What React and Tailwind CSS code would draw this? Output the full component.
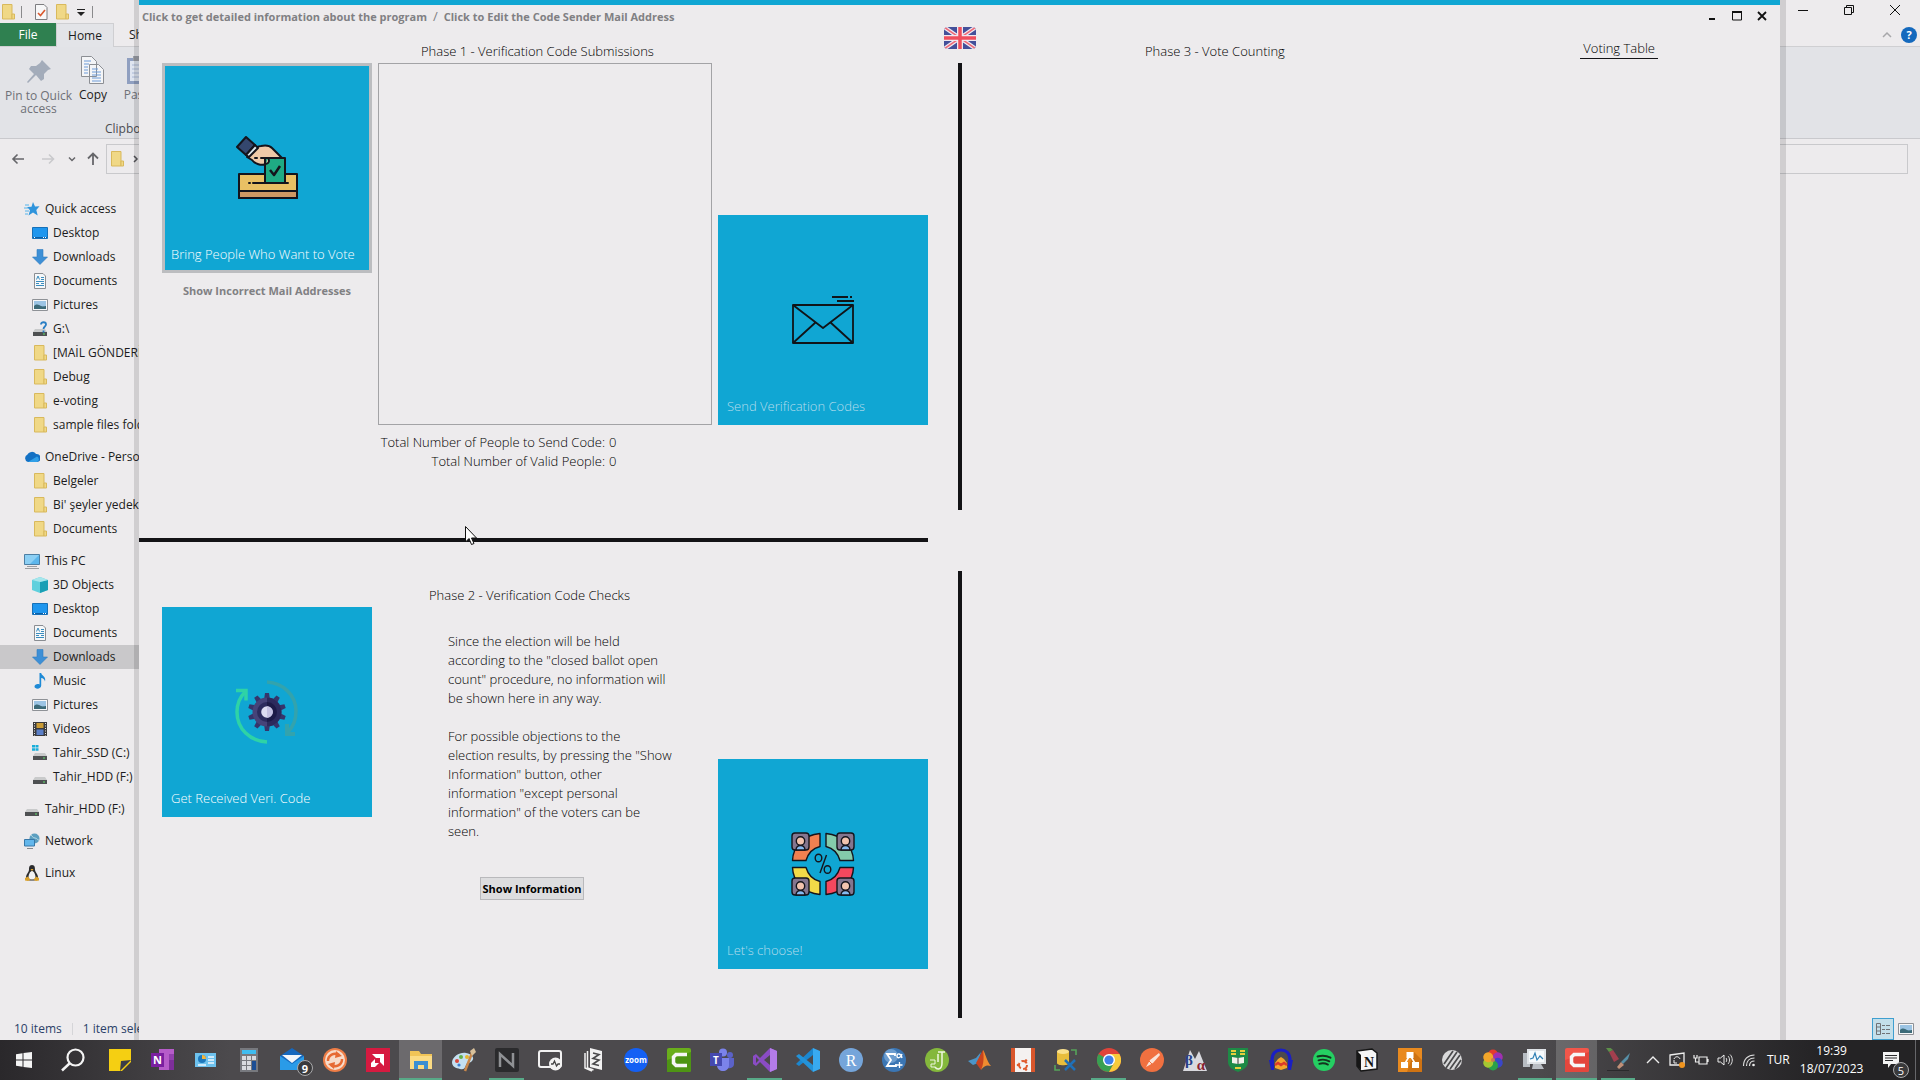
import React from "react";

const UI = "font-['Open_Sans','Noto_Sans',sans-serif]";

/* ---------- small icons ---------- */

function Svg({ size = "size-4", box = "0 0 16 16", children }) {
  return (
    <svg viewBox={box} className={`${size} shrink-0`} fill="none" aria-hidden="true">
      {children}
    </svg>
  );
}

const Folder = () => (
  <Svg>
    <path d="M2.5 .5h9.500v14.500h-9.500z" fill="#f0d886" stroke="#d9b95c" />
    <path d="M12 10h2.500v5H12z" fill="#f0d886" stroke="#d9b95c" />
  </Svg>
);
const Star = () => (
  <Svg>
    <path d="M9 1l2 4.500 4.500-.2L12.300 9l1.400 5.500L9 11.500 4.500 14.500 6 9.300 3 6l4.500-.3z" fill="#2f94dc" />
    <path d="M1 4h4M0 7h4M1 10h4M1 13h3" stroke="#55b4ec" />
  </Svg>
);
const DesktopIcon = () => (
  <Svg>
    <path d="M.5 2.500h15v11H.5z" fill="#1e96ee" stroke="#1670b8" />
    <path d="M1 12.500h14" stroke="#0c5fa5" />
    <path d="M2 12.500h1M11 12.500h1M13 12.500h1" stroke="#fff" />
  </Svg>
);
const DownArrow = () => (
  <Svg>
    <path d="M5 .5h6V8h4.500L8 15.500.5 8H5z" fill="#3d8fd6" stroke="#2f7cc0" strokeWidth=".6" />
  </Svg>
);
const DocIcon = () => (
  <Svg>
    <path d="M2.500.5H11L13.500 3v12.500h-11z" fill="#f5f7f9" stroke="#8a8d92" />
    <path d="M4.500 6.500L6 3l1.500 3.500M9 4.500h3M9 6.500h3M4 8.500h8M4 10.500h3M9 10.500h3M4 12.500h8" stroke="#3a8cbe" />
  </Svg>
);
const PictureIcon = () => (
  <Svg>
    <path d="M.5 2.500h15v11H.5z" fill="#f7f7f8" stroke="#8e9196" />
    <path d="M2 4h12v8H2z" fill="#9cc4e4" />
    <path d="M2 9c3-3 5-1 7 0s4 0 5 0v3H2z" fill="#3c6a78" />
  </Svg>
);
const Drive = ({ extra }) => (
  <Svg>
    <path d="M3 8h10l2 3H1z" fill="#c9cacb" />
    <path d="M1 11h14v4H1z" fill="#4e5052" />
    <path d="M11 13h2" stroke="#5fe06a" />
    {extra === "help" && <path d="M9 3.500c0-3 5-3 5 0 0 2-2.500 2-2.500 4.500M11.500 9.500v2" stroke="#2b7fc4" strokeWidth="1.800" />}
    {extra === "win" && <path d="M0 0h3v2.500H0zM3.500 0h3v2.500h-3zM0 3.200h3v2.500H0zM3.500 3.200h3v2.500h-3z" fill="#18aeda" />}
  </Svg>
);
const Cloud = () => (
  <Svg>
    <path d="M4 13a4 4 0 0 1-.5-7.500A5 5 0 0 1 12 5a4 4 0 0 1 1 8z" fill="#1471c4" />
    <path d="M4 13l9-5.500A3 3 0 0 1 13 13z" fill="#31a0e8" />
  </Svg>
);
const Pc = () => (
  <Svg>
    <path d="M.5 1.500h15v10H.5z" fill="#5cb6ec" stroke="#4d7fa4" />
    <path d="M1 2h14L6 11H1z" fill="#8ccff4" />
    <path d="M3 13.500h10M1 15.500h14" stroke="#9b9ea2" />
  </Svg>
);
const Cube = () => (
  <Svg>
    <path d="M0 3l8-3 8 3v10l-8 3-8-3z" fill="#5fd0dd" />
    <path d="M8 5l8-2v10l-8 3z" fill="#1a9fb5" />
    <path d="M0 3l8-3 8 3-8 2z" fill="#a6e6ec" />
  </Svg>
);
const Music = () => (
  <Svg>
    <path d="M7.500 0h1.700c.5 3 5 3 3.800 8.500-.5-2-2-3.500-3.800-3.500v7.500c0 4-6.700 4-6.700 1 0-2 3-3 5-2z" fill="#1e8ad6" />
  </Svg>
);
const Film = () => (
  <Svg>
    <path d="M1 1h14v14H1z" fill="#3a3a3c" />
    <path d="M4.500 2h7v5h-7z" fill="#c99a34" />
    <path d="M4.500 8.500h7V14h-7z" fill="#5b7fc8" />
    <path d="M2.500 2v13M13.500 2v13" stroke="#e8e8e8" strokeDasharray="1 1.500" />
  </Svg>
);
const NetworkIcon = () => (
  <Svg>
    <circle cx="10.500" cy="5.500" r="5" fill="#5c9fc0" />
    <path d="M7 2c2 1 1 3 4 3s2 3 4 2" stroke="#b4d8e4" />
    <path d="M.5 6.500h10v6.500H.5z" fill="#63b7ec" stroke="#3878a8" />
    <path d="M3 15.500h6" stroke="#85898d" />
  </Svg>
);
const Tux = () => (
  <Svg>
    <path d="M8 0c-3 0-3 3-3 5s-3 4-3 7 3 3.500 6 3.500 6-.5 6-3.500-3-5-3-7 0-5-3-5z" fill="#2b2b2d" />
    <path d="M8 6c-2 0-3.500 4-3.500 6S6 14.500 8 14.500s3.500-.5 3.500-2.500S10 6 8 6z" fill="#f2f2f2" />
    <path d="M6.500 4h3L8 6z" fill="#e8a82c" />
    <path d="M1 13l3-1.500L6.500 15 4 16l-3-.5zM15 13l-3-1.500L9.500 15l2.500 1 3-.5z" fill="#d9a02c" />
  </Svg>
);

/* ---------- explorer window ---------- */

const groups = [
  [
    ["Quick access", Star, 0],
    ["Desktop", DesktopIcon, 1],
    ["Downloads", DownArrow, 1],
    ["Documents", DocIcon, 1],
    ["Pictures", PictureIcon, 1],
    ["G:\\", () => <Drive extra="help" />, 1],
    ["[MAİL GÖNDERİ", Folder, 1],
    ["Debug", Folder, 1],
    ["e-voting", Folder, 1],
    ["sample files folder", Folder, 1],
  ],
  [
    ["OneDrive - Personal", Cloud, 0],
    ["Belgeler", Folder, 1],
    ["Bi' şeyler yedek", Folder, 1],
    ["Documents", Folder, 1],
  ],
  [
    ["This PC", Pc, 0],
    ["3D Objects", Cube, 1],
    ["Desktop", DesktopIcon, 1],
    ["Documents", DocIcon, 1],
    ["Downloads", DownArrow, 1, true],
    ["Music", Music, 1],
    ["Pictures", PictureIcon, 1],
    ["Videos", Film, 1],
    ["Tahir_SSD (C:)", () => <Drive extra="win" />, 1],
    ["Tahir_HDD (F:)", Drive, 1],
  ],
  [["Tahir_HDD (F:)", Drive, 0]],
  [["Network", NetworkIcon, 0]],
  [["Linux", Tux, 0]],
];

function Sidebar() {
  return (
    <nav className="mt-[23px] flex w-[139px] flex-1 flex-col gap-2 overflow-hidden">
      {groups.map((g, i) => (
        <ul key={i}>
          {g.map(([label, Icon, depth, on], j) => (
            <li
              key={j}
              className={`flex h-6 items-center gap-[5px] whitespace-nowrap ${depth ? "pl-8" : "pl-6"} ${on ? "bg-[#c9c8ca]" : ""}`}
            >
              <Icon />
              <span>{label}</span>
            </li>
          ))}
        </ul>
      ))}
    </nav>
  );
}

function Explorer() {
  return (
    <section className="flex h-full flex-col overflow-hidden bg-[#edebed] text-[12px] leading-4 text-[#1c1c20]">
      <header className="flex h-[23px] shrink-0 items-center">
        <div className="flex items-center gap-[5px]">
          <Folder />
          <span className="h-3 w-px bg-[#8a8a8c]" />
          <span className="w-px" />
          <Svg>
            <path d="M2.500.5H11L14 3.500v12H2.500z" fill="#f7f7f8" stroke="#7d7d80" />
            <path d="M5 9l2.500 2.500L12 6" stroke="#d9582e" strokeWidth="1.600" />
          </Svg>
          <Folder />
          <Svg size="size-3" box="0 0 12 12">
            <path d="M2 3.500h8" stroke="#222" />
            <path d="M2 6h8L6 10z" fill="#222" />
          </Svg>
          <span className="h-3 w-px bg-[#8a8a8c]" />
        </div>
        <div className="ml-auto flex items-center gap-[30px] pr-[17px] pb-[3px]">
          <button aria-label="Minimize explorer"><Svg><path d="M3 8.500h10" stroke="#111" /></Svg></button>
          <button aria-label="Restore explorer"><Svg><path d="M3.500 5.500h7v7h-7zM5.500 5V3.500h7v7H11" stroke="#111" /></Svg></button>
          <button aria-label="Close explorer"><Svg><path d="M3 3l10 10M13 3L3 13" stroke="#111" /></Svg></button>
        </div>
      </header>
      <div className="flex h-6 shrink-0 items-stretch border-b border-[#cfcfd2]">
        <button className="w-14 bg-[#2f8050] text-white">File</button>
        <button className="-mb-px w-[58px] border-x border-t border-[#cfcfd2] bg-[#e3e4e8]">Home</button>
        <button className="ml-[15px]">Share</button>
        <div className="ml-auto flex items-center gap-1.5 pr-[3px]">
          <Svg><path d="M4 10l4-4 4 4" stroke="#a7a7aa" strokeWidth="1.500" /></Svg>
          <span className="flex size-4 items-center justify-center rounded-full bg-[#1469bd] text-[11px] font-bold text-white">?</span>
        </div>
      </div>
      <div className="flex h-[92px] shrink-0 flex-col justify-between border-b border-[#c9c9cd] bg-[#e2e3e7]">
        <div className="flex items-start pt-2 text-center">
          <div className="flex w-[77px] flex-col items-center leading-[13px] text-[#6f7177]">
            <Svg size="size-8" box="0 0 32 32">
              <path d="M19 5l9 9-3 1-4 4v5l-3 2-5-6-8 8-1-1 7-8-5-5 2-3h5l4-3z" fill="#a3acba" />
            </Svg>
            <span className="pt-0.5">Pin to Quick access</span>
          </div>
          <div className="flex w-8 flex-col items-center">
            <Svg size="size-8" box="0 0 32 32">
              <path d="M4.500 1.500h10l5 5v15h-15zM12.500 9.500h9l5 5v14h-14z" fill="#f4f5f7" stroke="#8c8f94" />
              <path d="M7 6h7M7 9h5M7 12h4M7 15h4M7 18h4M15 14h6M15 17h9M15 20h9M15 23h9M15 26h9" stroke="#6d9bd8" />
            </Svg>
            <span>Copy</span>
          </div>
          <div className="ml-3 flex w-9 flex-col items-center text-[#6f7177]">
            <Svg size="size-8" box="0 0 32 32">
              <path d="M4 3h24v26H4z" fill="#8f9fc0" />
              <path d="M7 6h18v20H7z" fill="#dfe5f0" />
              <path d="M9 10h14M9 14h14M9 18h14M9 22h14" stroke="#a9b8d4" />
              <path d="M10 1h12v5H10z" fill="#9a9ea6" />
            </Svg>
            <span>Paste</span>
          </div>
        </div>
        <span className="pb-px pl-[105px] text-[#4b4d52]">Clipboard</span>
      </div>
      <div className="mt-[5px] flex h-[30px] shrink-0 items-center pr-3">
        <div className="flex w-[106px] shrink-0 items-center pl-[11px]">
          <Svg><path d="M13 8H2M6.500 3.500L2 8l4.500 4.500" stroke="#66666a" strokeWidth="1.600" /></Svg>
          <span className="w-3.5" />
          <Svg><path d="M1 8h11M8 3.500L12.500 8 8 12.500" stroke="#c9c9cc" strokeWidth="1.600" /></Svg>
          <span className="w-[9px]" />
          <Svg size="size-3" box="0 0 12 12"><path d="M3 4.500l3 3 3-3" stroke="#66666a" strokeWidth="1.500" /></Svg>
          <span className="w-[7px]" />
          <Svg><path d="M8 14V3M3 7.500L8 2.500l5 5" stroke="#66666a" strokeWidth="1.800" /></Svg>
        </div>
        <div className="flex h-[30px] flex-1 items-center gap-1.5 border border-[#c9c9cc] pl-0.5">
          <Folder />
          <Svg><path d="M3 5l3 3-3 3" stroke="#55555a" strokeWidth="1.500" /></Svg>
        </div>
      </div>
      <Sidebar />
      <footer className="flex h-[23px] shrink-0 items-center pl-3.5 text-[#2b3f68]">
        <span>10 items</span>
        <span className="mx-2.5 h-3 w-px bg-[#d5d5d8]" />
        <span className="whitespace-nowrap">1 item selected</span>
        <div className="ml-auto flex items-center gap-1 pr-1.5">
          <span className="flex size-[22px] items-center justify-center border border-[#3f9fd0] bg-[#c4dfea]">
            <Svg>
              <path d="M1.500 2.500h4v11h-4zM1.500 6h4M1.500 10h4M7 4.500h3M11 4.500h4M7 8.500h3M11 8.500h4M7 12.500h3M11 12.500h4" stroke="#707276" />
            </Svg>
          </span>
          <PictureIcon />
        </div>
      </footer>
    </section>
  );
}

/* ---------- voting application ---------- */

const BallotIcon = () => (
  <svg viewBox="0 0 64 64" className="size-16" fill="none" stroke="#14141c" strokeWidth="2" strokeLinejoin="round" aria-hidden="true">
    <path d="M4 38h58v24H4z" fill="#e9c064" />
    <path d="M4 55h58v7H4z" fill="#cf9863" />
    <path d="M17 15c3-3 6-5 9-5 5-1 9 0 11 2l10 10H33c2 2 1 5-1 6-6 2-12 0-15-4l-5-3z" fill="#eec9a8" />
    <path d="M30 22h20v25H30z" fill="#1faa84" />
    <path d="M33 22c2 3 1 5-2 6" fill="#eec9a8" />
    <path d="M11 1L2 11l9 8 9-10z" fill="#34476e" />
    <path d="M20 9l-9 10 3 2 9-9z" fill="#dfe9ef" />
    <path d="M35 34l4 5 6-9" strokeWidth="2.500" />
    <path d="M14 47h1M18 47h35M20 22h2M26 22h7" strokeLinecap="round" />
  </svg>
);

const EnvelopeIcon = () => (
  <svg viewBox="0 0 64 64" className="size-16" fill="none" stroke="#101418" strokeWidth="1.800" strokeLinejoin="round" aria-hidden="true">
    <path d="M2 17h60v38H2z" />
    <path d="M2 17l30 23 30-23M2 55l23-21M62 55L39 34" />
    <path d="M41 9h16M59 9h2M46 13h17" />
  </svg>
);

const teeth = [0, 36, 72, 108, 144, 180, 216, 252, 288, 324];
const GearIcon = () => (
  <svg viewBox="0 0 64 64" className="size-16" fill="none" aria-hidden="true">
    <path d="M32 62C15 61 2 49 2 32c0-8 3-15 8-20" stroke="#2ed3a6" strokeWidth="3.500" />
    <path d="M1 10.500h10v10" stroke="#2ed3a6" strokeWidth="3.500" />
    <path d="M32 2c16 1 29 13 29 29 0 9-3 16-8 21" stroke="#33a3ad" strokeWidth="3.500" />
    <path d="M52 44v10h8" stroke="#33a3ad" strokeWidth="4" />
    {teeth.map((a) => (
      <path key={a} d="M30 13h4l1 7h-6z" fill="#36356b" transform={`rotate(${a} 32 32)`} />
    ))}
    <circle cx="32" cy="32" r="14.500" fill="#464379" />
    <path d="M32 17.500a14.500 14.500 0 0 1 0 29z" fill="#2c2a5c" />
    <circle cx="32" cy="32" r="10" fill="#2c2b5e" />
    <path d="M32 22a10 10 0 0 1 0 20z" fill="#1d1b48" />
    <circle cx="32" cy="32" r="5.800" fill="#dcdcf2" />
    <path d="M32 26.200a5.800 5.800 0 0 1 0 11.600z" fill="#c3c0e2" />
  </svg>
);

const corners = [
  ["", "#f08050"],
  ["translate(64 0) scale(-1 1)", "#84cbab"],
  ["translate(0 64) scale(1 -1)", "#f2da48"],
  ["translate(64 64) scale(-1 -1)", "#f4485e"],
];
const heads = [[1, 1], [46, 1], [1, 46], [46, 46]];
const VotersIcon = () => (
  <svg viewBox="0 0 64 64" className="size-16" fill="none" stroke="#14141c" strokeWidth="1.400" strokeLinejoin="round" aria-hidden="true">
    {corners.map(([t, c]) => (
      <path key={c} transform={t} fill={c} d="M1.500 28.500C2 15 12 3 29 1.500v13c-8 2-12 7-14 14z" />
    ))}
    {heads.map(([x, y]) => (
      <g key={`${x}-${y}`} transform={`translate(${x} ${y})`}>
        <rect width="17" height="17" rx="3" fill="#84768f" />
        <path d="M4 17c0-6 9-6 9 0z" fill="#86baf0" />
        <circle cx="8.500" cy="8" r="4.200" fill="#f2c3ae" />
      </g>
    ))}
    <ellipse cx="27.500" cy="26" rx="3.300" ry="3.800" />
    <ellipse cx="36.500" cy="37.500" rx="3.300" ry="3.800" />
    <path d="M35.500 23L29 41" />
  </svg>
);

function Tile({ label, icon, dim, focused, className = "" }) {
  return (
    <button
      className={`grid size-[210px] shrink-0 grid-rows-[1fr_64px_1fr] justify-items-center bg-[#10a6d3] ${
        focused ? "border-[3px] border-[#bcbdc0] p-0" : "p-[3px]"
      } ${className}`}
    >
      <span />
      {icon}
      <span
        className={`mb-1.5 ml-1.5 self-end justify-self-start whitespace-nowrap text-[13px] leading-5 font-light ${
          dim ? "text-[#b5dcec]" : "text-white"
        }`}
      >
        {label}
      </span>
    </button>
  );
}

const Flag = () => (
  <svg viewBox="0 0 32 22" className="h-[22px] w-8 rounded-sm" aria-hidden="true">
    <path d="M0 0h32v22H0z" fill="#44509a" />
    <path d="M0 0l32 22M32 0L0 22" stroke="#efe9f0" strokeWidth="4" />
    <path d="M0 0l32 22M32 0L0 22" stroke="#ee6a78" strokeWidth="1.500" />
    <path d="M16 0v22M0 11h32" stroke="#efe9f0" strokeWidth="6" />
    <path d="M16 0v22M0 11h32" stroke="#f04e5c" strokeWidth="3.500" />
  </svg>
);

function VotingWindow() {
  return (
    <main className="absolute inset-y-0 right-[134px] left-[134px] flex flex-col border-r-[6px] border-l-[5px] border-black/12 bg-clip-padding text-[13px] leading-[19px] text-black">
      <div className="flex flex-1 flex-col overflow-hidden bg-[#edebed]">
        <div className="h-[5px] shrink-0 bg-[#10a6d3]" />
        <header className="flex h-[22px] shrink-0 items-center pr-2.5 pl-[3px] text-[11px] font-bold text-[#808083]">
          <a href="#info">Click to get detailed information about the program</a>
          <span className="px-1.5 text-[13px] font-normal">/</span>
          <a href="#mail">Click to Edit the Code Sender Mail Address</a>
          <div className="ml-auto flex gap-[9px]">
            <button aria-label="Minimize"><Svg><path d="M5 11h6" stroke="#111" strokeWidth="2" /></Svg></button>
            <button aria-label="Maximize"><Svg><path d="M3.500 4h9v8h-9z" stroke="#111" /><path d="M3 4h10" stroke="#111" strokeWidth="2" /></Svg></button>
            <button aria-label="Close"><Svg><path d="M4 4l8 8M12 4l-8 8" stroke="#111" strokeWidth="1.800" /></Svg></button>
          </div>
        </header>

        <div className="flex flex-1">
          <div className="flex w-[789px] shrink-0 flex-col font-light">
            <section className="flex h-[511px] flex-col pl-[23px]">
              <h2 className="flex h-9 items-end pb-0.5 pl-[259px]">Phase 1 - Verification Code Submissions</h2>
              <div className="flex">
                <div className="flex w-[210px] flex-col items-center">
                  <Tile focused label="Bring People Who Want to Vote" icon={<BallotIcon />} />
                  <button className="mt-2 text-[11px] font-bold text-[#808083]">Show Incorrect Mail Addresses</button>
                </div>
                <div className="ml-1.5 flex w-[334px] flex-col">
                  <div className="h-[362px] border border-[#a3a3a6]" />
                  <dl className="mt-2 grid grid-cols-[227px_auto] justify-start gap-x-1 text-right whitespace-nowrap">
                    <dt>Total Number of People to Send Code:</dt>
                    <dd>0</dd>
                    <dt>Total Number of Valid People:</dt>
                    <dd>0</dd>
                  </dl>
                </div>
                <Tile dim className="mt-[152px] ml-1.5" label="Send Verification Codes" icon={<EnvelopeIcon />} />
              </div>
            </section>
            <div className="h-1 shrink-0 bg-[#131316]" />
            <section className="flex flex-col pt-11 pl-[23px]">
              <h2 className="flex h-[21px] pl-[267px]">Phase 2 - Verification Code Checks</h2>
              <div className="flex">
                <Tile label="Get Received Veri. Code" icon={<GearIcon />} />
                <div className="flex w-[346px] flex-col px-[76px] pt-[25px]">
                  <p className="w-[230px]">
                    Since the election will be held<br />according to the "closed ballot open<br />count" procedure, no information will<br />be shown here in any way.
                  </p>
                  <p className="mt-[19px] w-[230px]">
                    For possible objections to the<br />election results, by pressing the "Show<br />Information" button, other<br />information "except personal<br />information" of the voters can be<br />seen.
                  </p>
                  <button className="mt-9 ml-8 h-[23px] w-[104px] border border-[#b9b9bc] bg-[#dddddf] text-[11px] leading-5 font-bold whitespace-nowrap">
                    Show Information
                  </button>
                </div>
                <Tile dim className="mt-[152px]" label="Let's choose!" icon={<VotersIcon />} />
              </div>
            </section>
          </div>

          <div className="ml-4 flex w-8 shrink-0 flex-col items-center">
            <button aria-label="Language: English" className="h-[22px]"><Flag /></button>
            <div className="mt-3.5 h-[447px] w-1 bg-[#131316]" />
            <div className="mt-[61px] h-[447px] w-1 bg-[#131316]" />
          </div>

          <section className="flex flex-1 items-start justify-between pr-[122px] pl-[169px] font-light">
            <h2 className="pt-[15px]">Phase 3 - Vote Counting</h2>
            <a href="#table" className="mt-3 border-b border-[#131316] px-[3px]">Voting Table</a>
          </section>
        </div>
      </div>
    </main>
  );
}

/* ---------- taskbar ---------- */

const T = ({ x = 12, y = 17, s = 14, f = "#fff", w = 700, ff = "Open Sans, sans-serif", children }) => (
  <text x={x} y={y} fontSize={s} fill={f} fontWeight={w} fontFamily={ff} textAnchor="middle">{children}</text>
);
const Disc = ({ f, r = 12 }) => <circle cx="12" cy="12" r={r} fill={f} />;
const Camtasia = ({ bg, dark }) => (
  <>
    <rect width="24" height="24" rx="2" fill={bg} />
    <path d="M0 12l24-8v18a2 2 0 0 1-2 2H0z" fill={dark} />
    <path d="M20 6.500H9L6.500 9v6L9 17.500h11" stroke="#f6f6f6" strokeWidth="3.500" />
  </>
);

const pinned = [
  ["Sticky Notes", <><path d="M1 1h22v13l-9 9H1z" fill="#f5cf12" /><path d="M23 12l-10 1-1 10z" fill="#3a3d48" /></>],
  ["OneNote", <><path d="M8 1h15v21H8z" fill="#b65cc9" /><path d="M18 6h5v6h-5z" fill="#9240ae" /><path d="M18 12h5v10h-5z" fill="#7e2f9a" /><path d="M0 5h13v14H0z" fill="#7a1fa0" /><T x={6.5} y={16} s={11}>N</T></>],
  ["Control Panel", <><path d="M1 5h21v14H1z" fill="#6ec2ee" /><circle cx="8" cy="11" r="4" fill="#1d78bd" /><path d="M8 11V7a4 4 0 0 1 4 4z" fill="#f4b63c" /><path d="M14 9h6M14 12h6M14 15h6M4 17h8" stroke="#eef8ff" strokeWidth="1.300" /></>],
  ["Calculator", <><path d="M3 0h18v24H3z" fill="#77797e" /><path d="M5 2h14v4H5z" fill="#3fbdf0" /><path d="M5 8h4v4H5zM10 8h4v4h-4zM15 8h4v4h-4zM5 13h4v4H5zM10 13h4v4h-4zM5 18h4v4H5zM10 18h4v4h-4z" fill="#d9dbdf" /><path d="M15 13h4v9h-4z" fill="#1c4e94" /></>],
  ["Mail", <><path d="M0 8l12-8 12 8v14H0z" fill="#1668bd" /><path d="M2 7h20l-10 8z" fill="#f2f6fa" /><path d="M0 8l12 8 12-8v14H0z" fill="#2a9be8" /></>, { badge: "9" }],
  ["Updater", <><Disc f="#ee7d46" /><Disc f="#f7dccb" r={10} /><path d="M5 13a7 7 0 0 1 11-6M19 11a7 7 0 0 1-11 6" stroke="#e66a34" strokeWidth="2.500" /><path d="M13 3l6 5-7 2zM11 21l-6-5 7-2z" fill="#e66a34" /></>],
  ["AMD Radeon", <><path d="M0 0h24v24H0z" fill="#d61a40" /><path d="M6 6h12v12l-4-4v-4h-4z" fill="#fff" /><path d="M9 11l-4 4v4h4l4-4H9z" fill="#fff" /></>],
  ["File Explorer", <><path d="M1 3h9l2 3h11v15H1z" fill="#f1c457" /><path d="M1 8h22v13H1z" fill="#fbdb84" /><path d="M5 13h14v8h-4v-4H9v4H5z" fill="#3c8fd2" /></>, { active: true }],
  ["Paint", <><path d="M0 14C1 8 8 4 14 5s9 5 6 8-5 1-6 4-2 5-6 4-8-2-8-7z" fill="#c4dff0" /><circle cx="5" cy="13" r="2" fill="#d9483b" /><circle cx="9" cy="9" r="2" fill="#62b04a" /><circle cx="15" cy="9" r="2" fill="#e8b52c" /><circle cx="7" cy="17" r="1.600" fill="#3e7fd0" /><path d="M20 5l-7 18" stroke="#c9874a" strokeWidth="2.500" /><path d="M18 3l4-3 2 4-4 4z" fill="#d9c19b" /></>],
  ["Nahimic", <><rect width="24" height="24" rx="2" fill="#2b2b2d" /><path d="M5 19V6l13 12V5" stroke="#8f9194" strokeWidth="2.500" /></>, { run: true }],
  ["Monitor", <><rect x="1" y="3" width="22" height="16" rx="2" stroke="#f2f2f2" strokeWidth="2" /><circle cx="17.500" cy="16" r="6.500" fill="#f2f2f2" /><path d="M13 16h2l1.500-3 2 5 1.500-2h2" stroke="#444" strokeWidth="1.300" /></>],
  ["Documents", <><path d="M4 5v15l7 3M6.500 3v17l6 2" stroke="#f2f2f2" strokeWidth="1.500" /><path d="M9 0l12 3v19L9 19z" fill="#f2f2f2" /><path d="M12 5l6 1.500-6 4 6 1.500-6 4 6 1.500" stroke="#4a4a4c" strokeWidth="1.600" /></>],
  ["Zoom", <><Disc f="#1460f4" /><T y={14.5} s={8}>zoom</T></>],
  ["Camtasia", <Camtasia bg="#6aae1c" dark="#4e9414" />],
  ["Teams", <><circle cx="20" cy="7" r="3" fill="#5b62c8" /><circle cx="13" cy="4.500" r="4" fill="#7b83ea" /><path d="M15 10h9v6c0 4-5 5-7 4z" fill="#5b62c8" /><path d="M7 10h12v7c0 8-12 8-12 0z" fill="#7b83ea" /><path d="M0 5h12v13H0z" fill="#4549b0" /><T x={6} y={15.5} s={10}>T</T></>],
  ["Visual Studio", <><path d="M17 0l7 3v18l-7 3L7 14l-4 4-3-2V8l3-2 4 4z" fill="#8a4cc4" /><path d="M17 0l7 3v18l-7 3z" fill="#b57cea" /><path d="M17 7v10l-6-5zM3 9v6l3-3z" fill="#4b494c" /></>, { run: true }],
  ["Visual Studio Code", <><path d="M17 0L2 14l-2 2 3 2L17 7z" fill="#1b87cf" /><path d="M3 6L0 8l17 16v-7z" fill="#2392d8" /><path d="M17 0l7 3v18l-7 3z" fill="#38aaf0" /></>],
  ["RStudio", <><Disc f="#75a5da" /><T y={17.5} s={16} w={400} ff="Liberation Serif, serif">R</T></>],
  ["Statistics", <><Disc f="#3b76b4" /><circle cx="9" cy="8" r="7" fill="#6c9dcf" /><path d="M13 8V6H5l4 6-4 6h9v-2" stroke="#fff" strokeWidth="1.800" /><path d="M20 6c-1 4-5 5-5 2s4-3 5 2M17.500 14v6M14.500 17h6" stroke="#fff" strokeWidth="1.300" /></>],
  ["JASP", <><Disc f="#84b83c" /><path d="M13 4h7M17 4v11c0 7-5 7-7 4M13 6v8" stroke="#eef6df" strokeWidth="1.500" /><path d="M5 12h5v4H6v3h4" stroke="#eef6df" /></>],
  ["MATLAB", <><path d="M0 13l8-3 5-6-3 11-5 2z" fill="#4a95c8" /><path d="M8 15l7-13 3 8-5 12z" fill="#c8431e" /><path d="M15 2c2 2 4 12 8 16-4-1-6-1-10 4 3-7 3-13 2-20z" fill="#f08c30" /></>],
  ["Ubuntu", <><path d="M0 0h24v24H0z" fill="#f4f1f0" /><path d="M0 0h4v24H0zM20 0h4v24h-4z" fill="#d9562c" /><circle cx="12" cy="17" r="4" stroke="#e05a2c" strokeWidth="2" strokeDasharray="6 2.400" /><circle cx="7" cy="17" r="1.300" fill="#e05a2c" /><circle cx="15" cy="12.500" r="1.300" fill="#e05a2c" /><circle cx="15" cy="21.500" r="1.300" fill="#e05a2c" /></>],
  ["SQL Tools", <><path d="M3 3v12c0 3 12 3 12 0V3z" fill="#e8bd3c" /><ellipse cx="9" cy="3.500" rx="6" ry="2.500" fill="#f9e08c" /><path d="M17 2h5v5M1 17v5h5" stroke="#56a45a" strokeWidth="1.600" /><path d="M11 12l10 10M21 12L11 22" stroke="#1f70b8" strokeWidth="2.500" /></>],
  ["Chrome", <><Disc f="#e0443a" /><path d="M12 12L1.600 6A12 12 0 0 0 12 24l5-9z" fill="#38a052" /><path d="M12 24a12 12 0 0 0 10.400-18H12l5 9z" fill="#f7cb3c" /><Disc f="#fff" r={6} /><Disc f="#3f80ea" r={4.6} /></>, { run: true }],
  ["Postman", <><Disc f="#f07040" /><path d="M19 5l-9 7-4 7 7-4 7-8z" fill="#fae3d8" /><path d="M9 13l3 3" stroke="#f07040" /></>],
  ["Beta Alpha", <><path d="M0 23L7 2l5 9 4-8 8 20z" fill="#d9d9de" /><T x={6} y={17} s={15} f="#283f86" ff="Liberation Serif, serif">β</T><T x={18} y={22} s={15} f="#8c2432" ff="Liberation Serif, serif">α</T></>],
  ["Crest", <><path d="M2 0h20v14c0 6-6 8-10 10C8 22 2 20 2 14z" fill="#1e8a46" /><path d="M5 3h5M14 3h5M5 6h5M14 6h5M9 20h6" stroke="#e6cf3c" strokeWidth="1.800" /><path d="M6 9l6 1 6-1v6l-6 1-6-1z" fill="#f2f2ea" /><path d="M12 10v6" stroke="#333" /></>],
  ["Audacity", <><path d="M3 15C2 4 8 2 12 2s10 2 9 13" stroke="#1a1fc4" strokeWidth="3" /><path d="M0 12h5v10H2zM24 12h-5v10h3z" fill="#1a1fc4" /><path d="M6 15l3-4 3-2 3 2 3 4v5l-6 2-6-2z" fill="#f3a42c" /><path d="M6 17l3-2 3 2 3-2 3 2" stroke="#d93a2a" strokeWidth="2.500" /></>],
  ["Spotify", <><Disc f="#25cf62" r={11} /><path d="M5.500 8.500c5-1.500 9-1 13 1.200M6.500 12.300c4-1.200 7.500-.8 10.800 1M7.300 15.800c3.400-.9 6-.6 8.600.8" stroke="#14341f" strokeWidth="1.900" strokeLinecap="round" /></>],
  ["Notion", <><path d="M2 3l15-2 5 4v16l-16 2-4-5z" fill="#f6f6f6" stroke="#161616" strokeWidth="1.500" /><path d="M2 3l4 4v15l-4-4z" fill="#161616" /><T x={14} y={19} s={14} f="#161616" ff="Liberation Serif, serif">N</T></>],
  ["draw.io", <><path d="M0 0h24v24H0z" fill="#e98a1f" /><path d="M16 4l8 8v12H9z" fill="#cf7312" /><path d="M12 7L6 17M12 7l6 10" stroke="#fff" strokeWidth="1.600" /><path d="M8.500 4h7v6h-7zM3 14h7v6H3zM14 14h7v6h-7z" fill="#fff" /></>],
];

const wheel = [["#e33b2e", 0], ["#a030b0", 60], ["#3a46c8", 120], ["#2aa04a", 180], ["#a4c832", 240], ["#f2a62a", 300]];
const running = [
  ["Stripes", <><Disc f="#d9d9da" r={10} /><path d="M4 16L13 3M6 20L17 4M10 21L20 7M15 21l6-9" stroke="#4a4a4c" strokeWidth="1.700" /></>],
  ["Color Wheel", <>{wheel.map(([c, a]) => (<circle key={a} cx="12" cy="6.500" r="5" fill={c} transform={`rotate(${a} 12 12)`} />))}<Disc f="#c87a50" r={2} /></>],
  ["Performance", <><path d="M0 5h7v14H0z" fill="#b7bcc2" /><path d="M4 1h19v15H4z" fill="#dfe3e7" /><path d="M6 3h15v11H6z" fill="#f6fafc" /><path d="M7 11l3-1 2-5 2 7 3-4 3 3" stroke="#2e7fb4" strokeWidth="1.200" /><path d="M10 16h8l3 5H9z" fill="#b9bdc3" /></>, { run: true }],
  ["Camtasia Recorder", <Camtasia bg="#f2564a" dark="#e4463c" />, { active: true }],
  ["Drawing", <><path d="M3 4l4-2 6 9-5 3z" fill="#a33f4e" /><path d="M0 0l4-.5L7 2 3 4z" fill="#5d8f4a" /><path d="M24 5l-2 6-5 5-2-2z" fill="#5790a8" /><path d="M15 14l3 3-5 4-2-2z" fill="#c09078" /><path d="M1 22.500h22" stroke="#2a2a2c" /></>, { run: true }],
];

function AppButton({ name, art, o = {}, width }) {
  return (
    <button
      aria-label={name}
      className={`relative flex items-center justify-center ${width} ${
        o.active ? "border-b-2 border-[#58aa88] bg-white/18 pt-0.5" : ""
      }`}
    >
      <Svg size="size-6" box="0 0 24 24">{art}</Svg>
      {o.run && <span className="absolute inset-x-1 bottom-0 h-0.5 bg-[#58aa88]" />}
      {o.badge && (
        <span className="absolute right-0 bottom-1 flex size-4 items-center justify-center rounded-full border border-[#a9a9ab] bg-[#3a3a3c] text-[11px] leading-none font-bold">
          {o.badge}
        </span>
      )}
    </button>
  );
}

function Taskbar() {
  return (
    <footer className="flex h-10 shrink-0 items-stretch bg-[linear-gradient(90deg,#2a282b,#4c4a4d_12%,#4c4a4d_80%,#242325_95%)] text-white">
      <button aria-label="Start" className="flex w-12 items-center justify-center">
        <Svg><path d="M0 2.200l6.500-1V7.500H0zM7.500 1L16 0v7.500H7.500zM0 8.500h6.500v6.300l-6.500-1zM7.500 8.500H16V16l-8.500-1z" fill="#f4f4f4" /></Svg>
      </button>
      <button aria-label="Search" className="flex w-[50px] items-center justify-center">
        <Svg size="size-6" box="0 0 24 24"><circle cx="14.500" cy="9.500" r="8" stroke="#f4f4f4" strokeWidth="2.200" /><path d="M9 15l-8 7.500" stroke="#f4f4f4" strokeWidth="2.400" /></Svg>
      </button>
      <div className="flex flex-1">
        {pinned.map(([name, art, o]) => (
          <AppButton key={name} name={name} art={art} o={o} width="w-[43px] shrink-0" />
        ))}
        {running.map(([name, art, o]) => (
          <AppButton key={name} name={name} art={art} o={o} width="flex-1" />
        ))}
      </div>
      <div className="flex w-[281px] shrink-0 items-center gap-2 pl-1.5 text-[12px] leading-[18px]">
        <Svg><path d="M2 11l6-6 6 6" stroke="#eee" strokeWidth="1.400" /></Svg>
        <Svg><path d="M1 3l14-2v12H1z" stroke="#eee" strokeWidth="1.300" /><path d="M5 7c1-3 5-3 6 0M5 8v3h3" stroke="#eee" /><circle cx="13" cy="13" r="3" fill="#f0941e" /></Svg>
        <Svg><path d="M6 5h8v7H6zM15 7v3M1 3v3h3V3M2.500 6v4H6" stroke="#eee" strokeWidth="1.200" /></Svg>
        <Svg><path d="M1 6h2.500L7 3v10L3.500 10H1z" stroke="#eee" /><path d="M9 6c1 1 1 3 0 4M11 4c2 2 2 6 0 8M13 2.500c3 3 3 8 0 11" stroke="#ddd" /></Svg>
        <Svg><circle cx="12.500" cy="13" r="1.300" fill="#eee" /><path d="M8.500 14c0-3 2-5 5-5M5.500 14c0-5 3-8 8-8M2.500 14C2.500 7 7 3 13.500 3" stroke="#ddd" strokeWidth="1.200" /></Svg>
        <span className="pl-0.5">TUR</span>
        <time className="pl-0.5 text-center">19:39<br />18/07/2023</time>
        <span className="relative mr-1 ml-auto">
          <Svg size="size-6" box="0 0 24 24"><path d="M4 4h16v12h-8l-3 4v-4H4z" fill="#f4f4f4" /><path d="M6 7.500h12M6 10h12M6 12.500h8" stroke="#2a2a2c" /></Svg>
          <span className="absolute -right-1.5 -bottom-1.5 flex size-4 items-center justify-center rounded-full border border-[#a9a9ab] bg-[#3a3a3c] text-[11px] leading-none">5</span>
        </span>
        <span className="mr-1 h-10 w-px bg-[#66666a]" />
      </div>
    </footer>
  );
}

export default function App() {
  return (
    <div className={`flex h-screen min-h-[1080px] flex-col overflow-hidden ${UI}`}>
      <div className="relative min-h-0 flex-1">
        <Explorer />
        <VotingWindow />
        <svg viewBox="0 0 12 19" className="absolute top-[526px] left-[465px] h-[19px] w-3" aria-hidden="true">
          <path d="M.5.5v15.500l3.500-3.500 2.500 6 2.500-1-2.500-5.500h5z" fill="#fff" stroke="#111" />
        </svg>
      </div>
      <Taskbar />
    </div>
  );
}
